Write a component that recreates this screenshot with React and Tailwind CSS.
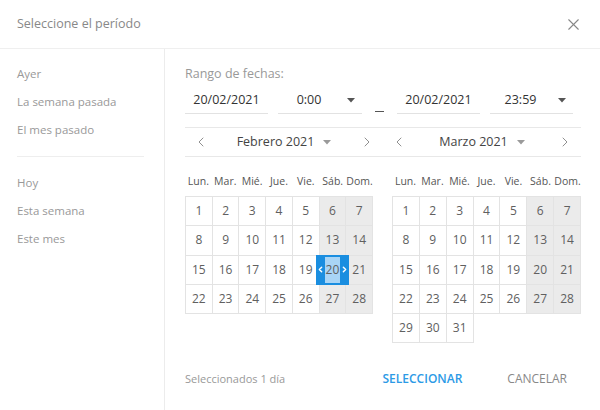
import React from 'react';
import { X, ChevronLeft, ChevronRight } from 'lucide-react';

const DAYS = ['Lun.', 'Mar.', 'Mié.', 'Jue.', 'Vie.', 'Sáb.', 'Dom.'];

function Caret({ className }) {
  return (
    <svg width="8" height="5" viewBox="0 0 8 5" className={className}>
      <path d="M0 0h8L4 4.5z" fill="currentColor" />
    </svg>
  );
}

function Calendar({ days, width, selected }) {
  return (
    <div style={{ width }}>
      <div className="grid grid-cols-7 pt-[17px] pb-[8px]">
        {DAYS.map((d) => (
          <div key={d} className="text-center text-[10.5px] leading-[14px] text-[#555]">{d}</div>
        ))}
      </div>
      <div className="grid grid-cols-7 border-l border-t border-[#e3e3e3]">
        {days.map((n, i) => {
          const weekend = i % 7 >= 5;
          const isSel = n === selected;
          return (
            <div
              key={n}
              className={`relative h-[29.3px] flex items-center justify-center border-r border-b border-[#e3e3e3] text-[12px] text-[#606060] ${weekend ? 'bg-[#ebebeb]' : 'bg-white'}`}
            >
              {isSel && (
                <div className="absolute -left-[4px] -right-[4px] -top-px -bottom-px z-10 flex bg-[#1a8ee0]">
                  <div className="w-[9px] flex items-center justify-center">
                    <ChevronLeft size={9} strokeWidth={4} className="text-white" />
                  </div>
                  <div className="flex-1 my-[2px] bg-[#a9d5f6]" />
                  <div className="w-[9px] flex items-center justify-center">
                    <ChevronRight size={9} strokeWidth={4} className="text-white" />
                  </div>
                </div>
              )}
              <span className="relative z-20">{n}</span>
            </div>
          );
        })}
      </div>
    </div>
  );
}

function MonthNav({ label }) {
  return (
    <div className="flex-1 flex items-center justify-between px-[8px]">
      <ChevronLeft size={16} strokeWidth={1.4} className="text-[#888]" />
      <div className="flex items-center gap-[9px] text-[12.5px] text-[#444]">
        {label}
        <Caret className="text-[#9a9a9a]" />
      </div>
      <ChevronRight size={16} strokeWidth={1.4} className="text-[#888]" />
    </div>
  );
}

const range = (a, b) => Array.from({ length: b - a + 1 }, (_, i) => a + i);

export default function App() {
  const shortcuts1 = ['Ayer', 'La semana pasada', 'El mes pasado'];
  const shortcuts2 = ['Hoy', 'Esta semana', 'Este mes'];

  return (
    <div className="w-[600px] h-[410px] bg-white flex flex-col overflow-hidden" style={{ fontFamily: '"Open Sans", "Liberation Sans", sans-serif' }}>
      <div className="h-[49px] shrink-0 flex items-center justify-between pl-[17px] pr-[17px] border-b border-[#efefef]">
        <span className="text-[12.5px] text-[#888]">Seleccione el período</span>
        <X size={19} strokeWidth={1.4} className="text-[#888]" />
      </div>

      <div className="flex flex-1">
        <div className="w-[165px] shrink-0 border-r border-[#ececec] pt-[11px] pl-[17px] pr-[20px]">
          {shortcuts1.map((s) => (
            <div key={s} className="h-[28px] flex items-center text-[11.5px] text-[#999] leading-none">{s}</div>
          ))}
          <div className="my-[12px] h-px bg-[#eeeeee]" />
          {shortcuts2.map((s) => (
            <div key={s} className="h-[28px] flex items-center text-[11.5px] text-[#999] leading-none">{s}</div>
          ))}
        </div>

        <div className="flex-1 pl-[20px] pr-[19px] pt-[16px]">
          <div className="text-[12.5px] leading-[18px] text-[#999]">Rango de fechas:</div>

          <div className="mt-[4px] flex items-end h-[27px]">
            <div className="w-[83px] h-full flex items-center justify-center border-b border-[#e2e2e2] text-[12.5px] text-[#333]">20/02/2021</div>
            <div className="ml-[10px] w-[84px] h-full flex items-center border-b border-[#e2e2e2] text-[12.5px] text-[#333]">
              <span className="w-[62px] text-center">0:00</span>
              <span className="flex-1 flex justify-center"><Caret className="text-[#555]" /></span>
            </div>
            <div className="w-[35px] h-full flex items-end justify-center pb-[2px]">
              <div className="w-[9px] h-px bg-[#555]" />
            </div>
            <div className="w-[83px] h-full flex items-center justify-center border-b border-[#e2e2e2] text-[12.5px] text-[#333]">20/02/2021</div>
            <div className="ml-[10px] w-[83px] h-full flex items-center border-b border-[#e2e2e2] text-[12.5px] text-[#333]">
              <span className="w-[61px] text-center">23:59</span>
              <span className="flex-1 flex justify-center"><Caret className="text-[#555]" /></span>
            </div>
          </div>

          <div className="mt-[13px] h-[30px] flex border-t border-b border-[#e8e8e8]">
            <MonthNav label="Febrero 2021" />
            <MonthNav label="Marzo 2021" />
          </div>

          <div className="flex gap-[19px]">
            <Calendar days={range(1, 28)} width={188} selected={20} />
            <Calendar days={range(1, 31)} width={189} />
          </div>

          <div className="mt-[26px] h-[20px] flex items-center">
            <span className="text-[11px] text-[#999]">Seleccionados 1 día</span>
            <span className="ml-auto text-[12px] font-semibold text-[#2c9ae6]">SELECCIONAR</span>
            <span className="ml-[45px] mr-[14px] text-[12px] text-[#888]">CANCELAR</span>
          </div>
        </div>
      </div>
    </div>
  );
}
